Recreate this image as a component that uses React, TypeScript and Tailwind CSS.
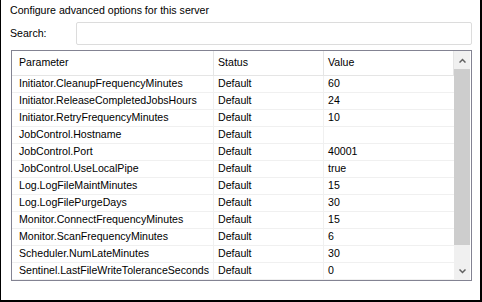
const rows: [string, string, string][] = [
  ["Initiator.CleanupFrequencyMinutes", "Default", "60"],
  ["Initiator.ReleaseCompletedJobsHours", "Default", "24"],
  ["Initiator.RetryFrequencyMinutes", "Default", "10"],
  ["JobControl.Hostname", "Default", ""],
  ["JobControl.Port", "Default", "40001"],
  ["JobControl.UseLocalPipe", "Default", "true"],
  ["Log.LogFileMaintMinutes", "Default", "15"],
  ["Log.LogFilePurgeDays", "Default", "30"],
  ["Monitor.ConnectFrequencyMinutes", "Default", "15"],
  ["Monitor.ScanFrequencyMinutes", "Default", "6"],
  ["Scheduler.NumLateMinutes", "Default", "30"],
  ["Sentinel.LastFileWriteToleranceSeconds", "Default", "0"],
];

function Chevron({ up }: { up?: boolean }) {
  return (
    <svg width="7" height="5" viewBox="0 0 7 5" className="text-[#606060]">
      <path
        d={up ? "M0.5 4.5 L3.5 1.5 L6.5 4.5" : "M0.5 0.5 L3.5 3.5 L6.5 0.5"}
        fill="none"
        stroke="currentColor"
        strokeWidth="1.5"
      />
    </svg>
  );
}

export default function App() {
  return (
    <div
      className="flex h-[302px] w-[482px] flex-col border-b-2 border-l border-r-2 border-black bg-white pl-[8px] text-[10.6px] text-black"
      style={{ fontFamily: '"Liberation Sans", Arial, sans-serif' }}
    >
      <div className="flex h-[20px] items-center pl-[1px] pt-[1px]">
        Configure advanced options for this server
      </div>

      <div className="mt-[2px] flex h-[23px] items-center">
        <span className="w-[67px] pl-[1px]">Search:</span>
        <div className="h-[23px] w-[396px] rounded-[2px] border border-[#dcdcdc] bg-white" />
      </div>

      <div className="ml-[2px] mt-[5px] flex h-[231px] w-[461px] border border-[#838392]">
        <div className="w-[442px] overflow-hidden">
          <div className="flex h-[25px] border-b border-[#e5e5e5]">
            <div className="flex w-[202px] items-center border-r border-[#e5e5e5] pl-[7px]">
              Parameter
            </div>
            <div className="flex w-[110px] items-center border-r border-[#e5e5e5] pl-[4px]">
              Status
            </div>
            <div className="flex w-[130px] items-center border-r border-[#e5e5e5] pl-[4px]">
              Value
            </div>
          </div>
          {rows.map(([name, status, value]) => (
            <div key={name} className="flex h-[17px] border-b border-[#f0f0f0]">
              <div className="flex w-[202px] items-center whitespace-nowrap border-r border-[#f0f0f0] pl-[7px]">
                {name}
              </div>
              <div className="flex w-[110px] items-center border-r border-[#f0f0f0] pl-[4px]">
                {status}
              </div>
              <div className="flex w-[130px] items-center pl-[4px]">{value}</div>
            </div>
          ))}
        </div>

        <div className="flex w-[16px] flex-col bg-[#f0f0f0]">
          <div className="flex h-[18px] items-center justify-center">
            <Chevron up />
          </div>
          <div className="h-[176px] bg-[#cdcdcd]" />
          <div className="flex-1" />
          <div className="flex h-[18px] items-center justify-center">
            <Chevron />
          </div>
        </div>
      </div>
    </div>
  );
}
